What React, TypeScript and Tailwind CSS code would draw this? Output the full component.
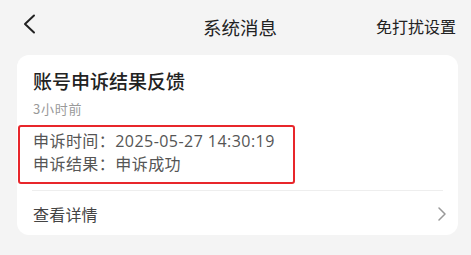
import React from "react";

const font = { fontFamily: '"Noto Sans CJK SC", "Noto Sans", sans-serif' };
const numFont = { fontFamily: '"Open Sans", "Noto Sans CJK SC", sans-serif' };

const App: React.FC = () => {
  return (
    <div className="w-[471px] h-[255px] bg-[#f4f4f4] overflow-hidden" style={font}>
      <div className="relative h-[55px] flex items-center justify-center">
        <button type="button" className="absolute left-[22px] top-[14px] text-[#222]">
          <svg width="14" height="20" viewBox="0 0 14 20" fill="none">
            <path d="M12 1.5 L3 10 L12 18.5" stroke="currentColor" strokeWidth="2" strokeLinecap="round" strokeLinejoin="round" />
          </svg>
        </button>
        <h1 className="ml-[9px] text-[18.5px] leading-[26px] text-[#222] -mt-[2px]">系统消息</h1>
        <span className="absolute right-[15px] top-[13px] text-[16px] leading-[26px] text-[#222]">
          免打扰设置
        </span>
      </div>

      <div className="ml-[17px] mr-[13px] bg-white rounded-[12px] pt-[13px] h-[180px]">
        <div className="px-[16px]">
          <h2 className="text-[19px] leading-[26px] text-[#222] font-medium">账号申诉结果反馈</h2>
          <p className="text-[13px] leading-[18px] text-[#999] mt-[6px] tracking-[0.8px]">3小时前</p>
        </div>
        <div
          className="ml-[1px] mt-[7px] w-[277px] h-[59px] border-2 border-[#e8262b] rounded-[3px] pl-[13px] pt-[3px] text-[16px] leading-[23px] text-[#555] tracking-[0.45px]"
          style={numFont}
        >
          <p>申诉时间：2025-05-27 14:30:19</p>
          <p>申诉结果：申诉成功</p>
        </div>
        <div className="mx-[15px] mt-[6px] border-t border-[#eeeeee]" />
        <div className="flex items-center justify-between px-[16px] h-[46px]">
          <span className="text-[16px] text-[#444] tracking-[0.2px]">查看详情</span>
          <svg width="8" height="14" viewBox="0 0 8 14" fill="none" className="text-[#999] mr-[-4px]">
            <path d="M1 1 L7 7 L1 13" stroke="currentColor" strokeWidth="1.5" strokeLinecap="round" strokeLinejoin="round" />
          </svg>
        </div>
      </div>
    </div>
  );
};

export default App;
